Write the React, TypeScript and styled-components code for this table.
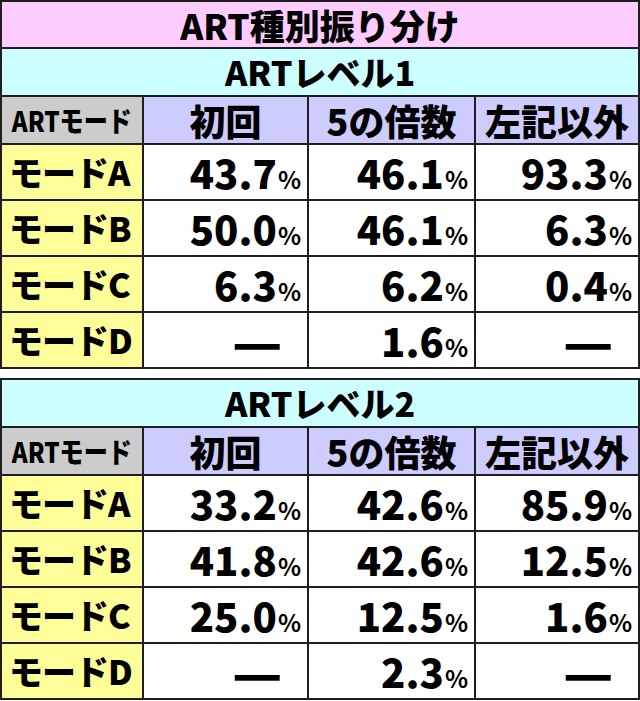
import React from "react";
import styled, { createGlobalStyle } from "styled-components";

const GlobalStyle = createGlobalStyle`
  html, body {
    margin: 0;
    padding: 0;
    background: #fff;
  }
  body {
    font-family: "Noto Sans CJK JP", "Noto Sans", sans-serif;
    color: #000;
  }
`;

const Page = styled.div`
  width: 640px;
  display: flex;
  flex-direction: column;
  gap: 9px;
`;

const Table = styled.div`
  display: grid;
  grid-template-columns: 140px 163px 165px 1fr;
  grid-auto-rows: auto;
  gap: 2px;
  background: #1e1e1e;
  border: 2px solid #1e1e1e;
`;

const Banner = styled.div<{ $bg: string; $size: number }>`
  grid-column: 1 / -1;
  height: ${(p) => (p.$size > 34 ? 45 : 46)}px;
  background: ${(p) => p.$bg};
  display: flex;
  align-items: center;
  justify-content: center;
  font-size: ${(p) => p.$size}px;
  font-weight: 900;
  line-height: 1;
`;

const HeadCell = styled.div<{ $bg: string }>`
  height: 46px;
  background: ${(p) => p.$bg};
  display: flex;
  align-items: center;
  justify-content: center;
  font-size: 36px;
  font-weight: 900;
  line-height: 1;
  white-space: nowrap;
`;

const Narrow = styled.span`
  display: inline-block;
  font-size: 28px;
  transform: scaleX(0.86);
  transform-origin: center;
`;

const Label = styled.div`
  height: 54px;
  background: #ffff99;
  display: flex;
  align-items: center;
  padding-left: 7px;
  font-size: 34px;
  font-weight: 900;
  letter-spacing: -1px;
  line-height: 1;
  white-space: nowrap;
`;

const Value = styled.div`
  height: 54px;
  background: #fff;
  display: flex;
  align-items: center;
  justify-content: flex-end;
  padding-right: 6px;
  white-space: nowrap;
`;

const Figure = styled.span`
  font-size: 40px;
  font-weight: 900;
  line-height: 1;
`;

const Pct = styled.span`
  font-size: 24px;
  font-weight: 700;
  margin-left: 1px;
`;

const Dash = styled.span`
  display: inline-block;
  margin-right: 18px;
  font-size: 40px;
  font-weight: 900;
  line-height: 1;
  transform: scale(1.38, 1.3);
  transform-origin: right center;
`;

type Row = { mode: string; values: (string | null)[] };

const level1: Row[] = [
  { mode: "モードA", values: ["43.7", "46.1", "93.3"] },
  { mode: "モードB", values: ["50.0", "46.1", "6.3"] },
  { mode: "モードC", values: ["6.3", "6.2", "0.4"] },
  { mode: "モードD", values: [null, "1.6", null] },
];

const level2: Row[] = [
  { mode: "モードA", values: ["33.2", "42.6", "85.9"] },
  { mode: "モードB", values: ["41.8", "42.6", "12.5"] },
  { mode: "モードC", values: ["25.0", "12.5", "1.6"] },
  { mode: "モードD", values: [null, "2.3", null] },
];

const Section = ({ level, rows, title }: { level: string; rows: Row[]; title?: string }) => (
  <Table>
    {title && (
      <Banner $bg="#ffccff" $size={35}>
        {title}
      </Banner>
    )}
    <Banner $bg="#ccffff" $size={34}>
      {level}
    </Banner>
    <HeadCell $bg="#cccccc">
      <Narrow>ARTモード</Narrow>
    </HeadCell>
    <HeadCell $bg="#ccccff">初回</HeadCell>
    <HeadCell $bg="#ccccff">5の倍数</HeadCell>
    <HeadCell $bg="#ccccff">左記以外</HeadCell>
    {rows.map((r) => (
      <React.Fragment key={r.mode}>
        <Label>{r.mode}</Label>
        {r.values.map((v, i) => (
          <Value key={i}>
            {v === null ? (
              <Dash>—</Dash>
            ) : (
              <Figure>
                {v}
                <Pct>%</Pct>
              </Figure>
            )}
          </Value>
        ))}
      </React.Fragment>
    ))}
  </Table>
);

export default function App() {
  return (
    <>
      <GlobalStyle />
      <Page>
        <Section title="ART種別振り分け" level="ARTレベル1" rows={level1} />
        <Section level="ARTレベル2" rows={level2} />
      </Page>
    </>
  );
}
